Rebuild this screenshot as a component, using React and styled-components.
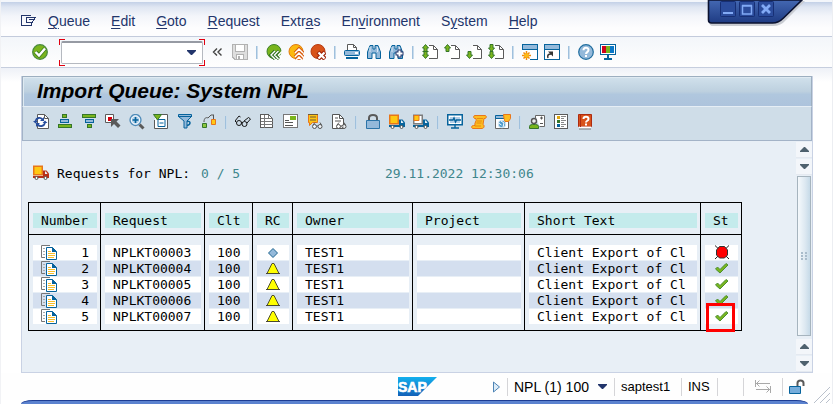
import React from "react";
import styled, { createGlobalStyle, css } from "styled-components";

const C = {
  ink: "#22356b",
  blue: "#06639c",
  sky: "#94b9da",
  green: "#7ab51d",
  leaf: "#35762a",
  gray: "#5a5a5a",
  amber: "#fbb911",
  orange: "#e8761a",
  brick: "#c63f10",
};

const GlobalStyle = createGlobalStyle`
  * { box-sizing: border-box; }
  body { margin: 0; background: #fff; font-family: "Liberation Sans", Arial, sans-serif; }
  button { border: 0; padding: 0; background: none; font: inherit; color: inherit; cursor: pointer; }
  svg { display: block; flex: none; }
`;

const Window = styled.div`
  position: relative;
  display: flex;
  flex-direction: column;
  min-height: 100vh;
  overflow: hidden;
  background: #fff;
  border-right: 1px solid #eceef2;
  border-left: 1px solid #f1f2f5;
`;

const MenuBar = styled.nav`
  display: flex;
  align-items: flex-start;
  gap: 21px;
  height: 37px;
  padding: 11px 20px 0;
  border-top: 2px solid #f3f6fb;
  border-bottom: 1px solid #c3cbdc;
  background: linear-gradient(#c3d0e7 0, #dfe6f2 5px, #f3f5fa 14px, #fdfdfe 26px);
  color: ${C.ink};
  font-size: 14px;
  line-height: 16px;
`;

const MenuItem = styled.button`
  white-space: nowrap;
  u { text-underline-offset: 2px; text-decoration-thickness: 1px; }
`;

const MenuStart = styled(MenuItem)`
  width: 16px;
  margin: 1px -10px 0 0;
`;

const SystemBar = styled.div`
  display: flex;
  align-items: center;
  gap: 6px;
  height: 31px;
  padding: 0 31px;
  border-bottom: 1px solid #c6cede;
  background: linear-gradient(#f3f6fa, #fefefe);
`;

const corner = "linear-gradient(#e00010, #e00010)";
const CommandFrame = styled.div`
  display: flex;
  flex: none;
  width: 146px;
  height: 27px;
  margin: 0 -1px 0 5px;
  padding: 2px;
  background:
    ${corner} 0 0 / 6px 1px, ${corner} 0 0 / 1px 6px,
    ${corner} 100% 0 / 6px 1px, ${corner} 100% 0 / 1px 6px,
    ${corner} 0 100% / 6px 1px, ${corner} 0 100% / 1px 6px,
    ${corner} 100% 100% / 6px 1px, ${corner} 100% 100% / 1px 6px;
  background-repeat: no-repeat;
`;

const CommandField = styled.div`
  display: flex;
  flex: 1;
  min-width: 0;
  align-items: center;
  padding-right: 6px;
  border: 1px solid #b5b9c0;
  border-top: 2px solid #969aa3;
  border-radius: 2px;
  background: #fff;
`;

const CommandInput = styled.input`
  flex: 1;
  width: 100%;
  min-width: 0;
  height: 100%;
  border: 0;
  outline: 0;
  padding: 0 4px;
  background: transparent;
  font: 14px "Liberation Sans", Arial, sans-serif;
`;

const IconButton = styled.button`
  flex: none;
  width: 16px;
  height: 16px;
`;

const Divider = styled.span`
  flex: none;
  width: 2px;
  height: 13px;
  margin: 0 ${(p) => p.$space || 0}px;
  background: linear-gradient(90deg, #9fc0dd 50%, #c9dcec 50%);
`;

const Main = styled.main`
  display: flex;
  flex: 1;
  padding: 8px 19px 0 20px;
  background: linear-gradient(#eef1f7, #fff 14px);
`;

const Panel = styled.section`
  display: flex;
  flex: 1;
  flex-direction: column;
  min-width: 0;
  border: 1px solid #c9d2e4;
  border-top: 0;
  background: #e8eff6;
`;

const TitleBar = styled.header`
  height: 31px;
  padding: 0 14px;
  border: 1px solid #9dafc0;
  border-bottom: 1px solid #e6eef5;
  box-shadow: inset 1px 1px #dfeaf2;
  background: linear-gradient(#d1e1ec, #bdd0df 50%, #b0c7de 60%, #adc3dc);
`;

const Title = styled.h1`
  margin: 0;
  color: #000;
  font-size: 21px;
  font-style: italic;
  font-weight: bold;
  line-height: 28px;
  white-space: nowrap;
`;

const AppBar = styled.div`
  display: flex;
  align-items: flex-start;
  gap: 8px;
  height: 34px;
  padding: 7px 10px 0;
  border: solid #a3b3c7;
  border-width: 0 1px 1px;
  background: #cfdde8;
  ${Divider} { margin-top: 2px; }
`;

const Body = styled.div`
  display: flex;
  flex: 1;
`;

const mono = css`
  color: #000;
  font-family: "DejaVu Sans Mono", monospace;
  font-size: 13px;
  line-height: 15px;
  white-space: pre;
`;

const Report = styled.div`
  flex: 1;
  min-width: 0;
  padding: 24px 6px 0;
  ${mono}
`;

const Summary = styled.div`
  display: grid;
  grid-template-columns: 24px 144px 184px auto;
  align-items: center;
  height: 16px;
  margin: 0 0 21px 5px;
`;

const Teal = styled.span`
  color: #3f868c;
`;

const QueueTable = styled.table`
  border: solid #000;
  border-width: 1px 1px 1px 0;
  border-spacing: 0;
  table-layout: fixed;
  width: 713px;
`;

const Col = styled.col`
  width: ${(p) => p.$w}px;
`;

const HeadCell = styled.th`
  padding: 10px 3px 6px 4px;
  border-left: 1px solid #000;
  border-bottom: 1px solid #000;
  font-weight: normal;
  text-align: left;
`;

const Cell = styled.td`
  padding: 0 3px 1px 4px;
  border-left: 1px solid #000;
  tr:first-child > & { padding-top: 10px; }
  tr:last-child > & { padding-bottom: 6px; }
`;

const Fill = styled.div`
  position: relative;
  display: flex;
  justify-content: ${(p) => (p.$icon ? "center" : "space-between")};
  height: 15px;
  padding: 0 ${(p) => (p.$icon ? 0 : 8)}px;
  background: ${(p) => (p.$head ? "#c4ebec" : p.$odd ? "#d4dfef" : "#fff")};
`;

const Marker = styled.span`
  position: absolute;
  top: -6px;
  left: 1px;
  width: 29px;
  height: 29px;
  border: 3px solid #f00;
`;

const ScrollBar = styled.div`
  display: flex;
  flex-direction: column;
  align-items: center;
  gap: 1px;
  width: 16px;
  padding: 1px 0 0;
`;

const ScrollButton = styled.button`
  display: grid;
  place-items: center;
  width: 16px;
  height: 16px;
  border-bottom: 1px solid #e4e9f0;
  background: #f3f6fa;
`;

const Thumb = styled.div`
  display: grid;
  flex: 1;
  place-items: center;
  width: 14px;
  margin-bottom: 2px;
  border: 1px solid #a6b4be;
  background: linear-gradient(90deg, #f5f9fc, #dce8f1 60%, #c6dae8);
`;

const StatusBar = styled.footer`
  display: flex;
  align-items: center;
  height: 27px;
  padding: 0 26px 0 0;
  color: #000;
  font-size: 13px;
  background: #fefefe;
`;

const StatusLogo = styled.div`
  display: flex;
  flex: 1;
  justify-content: flex-end;
  padding-right: 54px;
`;

const StatusItem = styled.div`
  display: flex;
  flex: none;
  align-items: center;
  justify-content: ${(p) => (p.$center ? "center" : "flex-start")};
  width: ${(p) => p.$w}px;
  height: 18px;
  padding-left: ${(p) => (p.$center ? 0 : 6)}px;
  border-left: 1px solid #d5d5d8;
`;

const SystemButton = styled.button`
  display: flex;
  align-items: center;
  justify-content: space-between;
  width: 93px;
  font-size: 14px;
  white-space: nowrap;
`;

const BottomEdge = styled.div`
  height: 4px;
  margin: 0 24px 0 20px;
  border-top: 1px solid #1d3d94;
  border-radius: 12px 12px 0 0 / 4px 4px 0 0;
  background: #5b82cf;
`;

const ResizeGrip = styled.div`
  position: absolute;
  right: 1px;
  bottom: 0;
`;

const WindowTab = styled.div`
  position: absolute;
  top: 0;
  right: 25px;
  width: 100px;
  height: 28px;
`;

const TabButtons = styled.div`
  position: absolute;
  top: 1px;
  left: 13px;
  display: flex;
  gap: 3px;
`;

const Svg = ({ children, w = 16, h = 16, ...rest }) => (
  <svg width={w} height={h} viewBox={`0 0 ${w} ${h}`} fill="none" aria-hidden="true" {...rest}>
    {children}
  </svg>
);

const Down = () => (
  <Svg w={9} h={5}><path d="M0 0h9v1L5 5H4L0 1z" fill={C.ink} /></Svg>
);

/* shared pieces of the larger icons */
const Arrow = ({ up, x = 0, y = 0 }) => (
  <path
    transform={`translate(${x} ${y})`}
    d={up ? "M3.5.5l3 3.500H5v3.500H2V4H.5z" : "M3.500 7.500l3-3.500H5V.5H2V4H.5z"}
    fill={C.green} stroke={C.leaf}
  />
);
const Page = () => (
  <>
    <path d="M5.500 1.500h6l4 4v9h-10z" fill="#fff" />
    <path d="M7 1.500h4.500l4 4v9H7M11.500 1.500v4h4" stroke={C.gray} />
  </>
);
const Disc = ({ fill, edge }) => <circle cx="8" cy="7.500" r="7" fill={fill} stroke={edge} />;
const Glasses = ({ x = 0, y = 0, c = "#111" }) => (
  <g transform={`translate(${x} ${y})`} stroke={c}>
    <circle cx="2.500" cy="4.500" r="2" fill="#fff" fillOpacity=".7" />
    <circle cx="8" cy="4.500" r="2" fill="#fff" fillOpacity=".7" />
    <path d="M1 3l2-2.500M9.500 3L8 .5M4.500 4h1.500" />
  </g>
);
const Binoculars = () => (
  <>
    <path d="M1.500 14.500V8L4 1.500h3V5h2V1.500h3L14.500 8v6.500h-4.500V9H6v5.500z" fill={C.sky} stroke={C.blue} />
    <path d="M4 3v5M11.500 3v5" stroke="#d7e8f5" />
  </>
);
const Truck = ({ cab, box, edge }) => (
  <>
    <path d="M0 11h10v2H0z" fill={cab} />
    <path d="M10 5.500h3.500l2.500 3V13h-6z" fill={cab} />
    <path d="M12 6.500h1L14.500 9H12z" fill="#e8f1f8" />
    <rect x=".75" y="1.250" width="8.500" height="8.500" fill={box} stroke={edge} strokeWidth="1.500" />
    <circle cx="3.500" cy="13" r="1.500" fill="#fff" stroke="#555" />
    <circle cx="12.500" cy="13" r="1.500" fill="#fff" stroke="#555" />
  </>
);

const icons = {
  start: (
    <Svg w={16} h={13} shapeRendering="crispEdges">
      <path d="M9.500 1.500h-9v10h10V9M5 3.500h9.500L11 8.500H5M5 3v6M8 5.500h4" stroke={C.ink} />
    </Svg>
  ),
  enter: (
    <Svg>
      <circle cx="8" cy="8" r="7.300" fill={C.green} stroke="#4a8b3d" strokeWidth="1.300" />
      <path d="M3.500 8l3.500 3.500 6-7" stroke="#3f7d22" strokeWidth="4" />
      <path d="M3.500 8l3.500 3.500 6-7" stroke="#fff" strokeWidth="2.400" />
    </Svg>
  ),
  collapse: <Svg><path d="M7 4.500L3.500 8 7 11.500M11.500 4.500L8 8l3.500 3.500" stroke="#444" strokeWidth="1.400" /></Svg>,
  save: (
    <Svg shapeRendering="crispEdges">
      <path d="M.5.5h15v15H3l-2.500-2.500z" fill="#dedede" stroke="#b2b2b2" />
      <path d="M3.500.5h9v7h-9zM4.500 10.500h7v5h-7z" fill="#fff" stroke="#b2b2b2" />
      <path d="M6.500 12v3" stroke="#b2b2b2" strokeWidth="2" />
    </Svg>
  ),
  back: (
    <Svg>
      <Disc fill={C.green} edge="#3f812b" />
      <path d="M9 7l-4 4 4 4M13 7l-4 4 4 4" stroke="#2c6b20" strokeWidth="3.200" />
      <path d="M9 7l-4 4 4 4M12.500 7l-4 4 4 4M16 7.500l-3.500 3.500 3.500 4" stroke="#fff" strokeWidth="1.400" />
    </Svg>
  ),
  exit: (
    <Svg>
      <Disc fill={C.amber} edge="#e07a12" />
      <path d="M7 9l4-4 4 4M7 13l4-4 4 4M8 16l3-3 3 3" stroke="#d8590b" strokeWidth="3.400" />
      <path d="M7 9l4-4 4 4M7 13l4-4 4 4M8 16l3-3 3 3" stroke="#fff" strokeWidth="1.500" />
    </Svg>
  ),
  cancel: (
    <Svg>
      <Disc fill="#d8531a" edge="#b83c12" />
      <path d="M8 8l7 7M15 8l-7 7" stroke="#9f250a" strokeWidth="4.500" />
      <path d="M8.500 8.500l6 6M14.500 8.500l-6 6" stroke="#fff" strokeWidth="2.200" />
    </Svg>
  ),
  print: (
    <Svg>
      <path d="M3.500 7.500v-7h6l3 3v4" fill="#fff" stroke={C.gray} />
      <path d="M9.500.5v3h3" stroke={C.gray} />
      <rect x=".5" y="6.500" width="15" height="5" rx="1" fill={C.sky} stroke={C.blue} />
      <path d="M2 14h12" stroke={C.blue} strokeWidth="2" />
      <path d="M11 9h3" stroke="#fff" strokeWidth="2" />
    </Svg>
  ),
  find: <Svg><Binoculars /></Svg>,
  findNext: (
    <Svg>
      <Binoculars />
      <path d="M11.500 5.500v8M7.500 9.500h8" stroke={C.ink} strokeWidth="4" />
      <path d="M11.500 6.500v6M8.500 9.500h6" stroke="#fff" strokeWidth="2" />
    </Svg>
  ),
  first: <Svg><Page /><Arrow up y={0} /><Arrow y={7} /><path d="M.5 7.500h6" stroke={C.leaf} /></Svg>,
  prev: <Svg><Page /><Arrow up y={0} /></Svg>,
  next: <Svg><Page /><Arrow y={7} /></Svg>,
  last: <Svg><Page /><Arrow y={0} /><Arrow y={7} /></Svg>,
  session: (
    <Svg>
      <path d="M.5.5h15v15h-15z" fill="#fff" stroke={C.blue} shapeRendering="crispEdges" />
      <path d="M1 3h14" stroke={C.sky} strokeWidth="4" /><path d="M0 5.500h16" stroke={C.blue} />
      <path d="M0 6h8v10H0z" fill="#fff" />
      <path d="M4.500 7v9M0 11.500h9M1.500 8.500l6 6M7.500 8.500l-6 6" stroke="#f08a0c" strokeWidth="1.500" />
      <circle cx="4.500" cy="11.500" r="2.300" fill="#fdb913" />
    </Svg>
  ),
  shortcut: (
    <Svg>
      <path d="M.5.5h15v15h-15z" fill="#fff" stroke={C.blue} shapeRendering="crispEdges" />
      <path d="M1 3h14" stroke={C.sky} strokeWidth="4" /><path d="M0 5.500h16" stroke={C.blue} />
      <path d="M4 14c-1-3 .5-4 3-4" stroke="#333" strokeWidth="1.500" /><path d="M4 7.500h5v5z" fill="#333" />
    </Svg>
  ),
  help: (
    <Svg>
      <circle cx="8" cy="8" r="7.300" fill={C.sky} stroke="#1f6d9f" strokeWidth="1.200" />
      <path d="M5.500 6.200C5.500 3 10.500 3 10.500 6c0 2-2.500 2.200-2.500 4M8 11v2" stroke="#fff" strokeWidth="2" />
    </Svg>
  ),
  layout: (
    <Svg shapeRendering="crispEdges">
      <path d="M.5.5h15v10H.5z" fill="#fff" stroke={C.blue} />
      <path d="M2 2h4v7H2z" fill="#d0021b" /><path d="M6 2h4v7H6z" fill={C.green} /><path d="M10 2h4v7h-4z" fill="#0a78c8" />
      <path d="M7 11h2v3H7zM4 14h8v2H4z" fill={C.blue} />
    </Svg>
  ),
  refresh: (
    <Svg>
      <path d="M4.500.5h7l4 4v10h-11z" fill="#fff" stroke={C.gray} /><path d="M11.500.5v4h4" stroke={C.gray} />
      <path d="M2.500 7C3.500 3.500 7.500 3 9.500 5.500M12 9c-1 3.500-5 4-7.500 1.500" stroke="#274d9c" strokeWidth="1.800" />
      <path d="M7 7h4V3zM7 9H3v4zM0 7h5L2.500 9.500zM9.500 9h5L12 6.500z" fill="#274d9c" />
    </Svg>
  ),
  asc: (
    <Svg shapeRendering="crispEdges">
      <path d="M5.500.5h4v3h-4zM1.500 10.500h13v3h-13z" fill={C.green} stroke={C.leaf} />
      <path d="M3.500 5.500h8v3h-8z" fill={C.sky} stroke={C.blue} />
    </Svg>
  ),
  desc: (
    <Svg shapeRendering="crispEdges">
      <path d="M1.500.5h13v3h-13zM6.500 10.500h4v3h-4z" fill={C.green} stroke={C.leaf} />
      <path d="M4.500 5.500h8v3h-8z" fill={C.sky} stroke={C.blue} />
    </Svg>
  ),
  select: (
    <Svg>
      <path d="M.5.5h8v8h-8z" fill="#fff" stroke={C.gray} /><path d="M3 3h4v4H3z" fill="#d9000d" />
      <path d="M6 5h8l-2.500 2.500 4 4-2.500 2.500-4-4L6 13z" fill={C.gray} />
    </Svg>
  ),
  zoom: (
    <Svg>
      <path d="M10.500 10.500l4 4" stroke={C.gray} strokeWidth="3" />
      <circle cx="6.500" cy="6" r="5.500" fill={C.sky} stroke="#4f8bb8" strokeWidth="1.300" />
      <circle cx="6.500" cy="6" r="4.200" fill="#b9d5ec" stroke="#fff" /><path d="M6.500 3v6M3.500 6h6" stroke={C.blue} strokeWidth="1.700" />
    </Svg>
  ),
  choose: (
    <Svg>
      <path d="M3.500.5h11v14h-13V6" fill="#fff" stroke={C.gray} />
      <path d="M5 12.500v-7h7v7zM6.500 9h4" stroke={C.blue} />
      <path d="M.5.5h8L4.500 6z" fill={C.green} stroke={C.leaf} />
    </Svg>
  ),
  filter: (
    <Svg>
      <path d="M1.500.5h13v2L10 7v7H7V7L1.500 2.500z" fill={C.sky} stroke={C.blue} />
      <path d="M1 2.500h14" stroke={C.blue} /><path d="M10 7.500c4-1 4 3 0 4" stroke={C.blue} strokeWidth="1.500" />
    </Svg>
  ),
  route: (
    <Svg>
      <path d="M3 8c0-4 2-5 4-4l3-3h3M12.500 1v4" stroke="#555" />
      <path d="M1.500 9.500h4v4h-4z" fill="#8cc63f" stroke={C.leaf} />
      <path d="M10.500 5.500h4v5h-4z" fill="#ffc914" stroke={C.orange} />
    </Svg>
  ),
  display: (
    <Svg>
      <g stroke="#151515">
        <circle cx="4" cy="9" r="2.500" /><circle cx="9.500" cy="10" r="2.500" />
        <path d="M1.500 8.500L0 7l4-5 1.500 1M6.500 9.500L7 8M12 9l3.500-4-2-1.500L9 7" />
      </g>
    </Svg>
  ),
  list: (
    <Svg shapeRendering="crispEdges">
      <path d="M1.500.5h8l4 4v9h-12z" fill="#fff" stroke={C.gray} />
      <path d="M9.500.5v4h4M1.500 4.500h12M1.500 7.500h12M1.500 10.500h12M5.500.5v13" stroke="#777" />
    </Svg>
  ),
  object: (
    <Svg shapeRendering="crispEdges">
      <path d="M.5.5h14v13H.5z" fill="#fff" stroke="#777" /><path d="M7 2h6v4H7z" fill={C.green} />
      <path d="M2 6.500h4M2 8.500h8M2 11.500h8" stroke="#555" />
    </Svg>
  ),
  logs: (
    <Svg>
      <path d="M1.500.5h9v8h-5l-3 3v-3h-1z" fill="#fdc414" stroke={C.orange} />
      <path d="M1 .5h10M3 3h6M3 6h6" stroke="#6d5a3a" /><Glasses x={5} y={8} c="#555" />
    </Svg>
  ),
  preview: (
    <Svg>
      <path d="M1.500.5h7l4 4v10h-11z" fill="#fff" stroke="#555" /><path d="M8.500.5v4h4M4 4h3M4 7h6" stroke="#555" />
      <Glasses x={5} y={8} c="#555" />
    </Svg>
  ),
  lock: (
    <Svg>
      <path d="M4 7V4q0-3 4-3t4 3v3" stroke={C.gray} strokeWidth="2" />
      <path d="M1.500 6.500h13v8h-13z" fill={C.sky} stroke="#2c74a8" />
    </Svg>
  ),
  truck: <Svg><Truck cab={C.blue} box="#ffc814" edge={C.orange} /></Svg>,
  truckPart: (
    <Svg><Truck cab={C.blue} box="#fff" edge="#7d7d7d" /><path d="M1 1.500h5v5H1z" fill="#ffc814" stroke={C.orange} /></Svg>
  ),
  truckRed: <Svg><Truck cab="#b8301a" box="#ffc814" edge={C.orange} /></Svg>,
  monitor: (
    <Svg>
      <rect x=".75" y=".75" width="14.500" height="10" fill="#fff" stroke={C.blue} strokeWidth="1.500" /><path d="M3 3h10v6H3z" fill="#b5d0e8" />
      <path d="M2 6h4l1-2 1.500 4 1-2H14M8 11v3M4 14h8" stroke={C.blue} strokeWidth="1.400" />
    </Svg>
  ),
  script: (
    <Svg>
      <path d="M4 1.500h10c2 0 1.500 3 0 3h-1l-1 6c2 1 1 4-1 4H1.500c-1.500-1-1-3 1-3H4c-1-3 2-4 1-7H3.500c-1.500-1-1-3 .5-3z" fill="#fdbd20" stroke={C.orange} />
      <path d="M6 4.500h6M6 7h5M5.500 9h5M4 12h6" stroke="#e88a10" />
    </Svg>
  ),
  webScript: (
    <Svg>
      <path d="M.5 2.500h13v12H.5z" fill="#fff" stroke="#666" /><path d="M.5 1.500h9v3h-9z" fill={C.sky} stroke={C.blue} />
      <circle cx="7" cy="10" r="3.800" fill="#4d9bcc" stroke="#d9e9f4" /><path d="M6 7l3 2-1 4M3.500 9l3 2" stroke="#fff" />
      <path d="M8.500.5h7v4l-2 3H10l-1-3z" fill="#fdbd20" stroke={C.orange} />
    </Svg>
  ),
  owner: (
    <Svg>
      <path d="M6.500 1.500h9v11h-5M6.500 1.500V4" fill="#fff" stroke="#666" /><path d="M11 4h3M12.500 2.500v3M11 9.500h3" stroke="#555" />
      <path d="M.5 14.500v-2q0-2 3-2h3q3 0 3 2v2z" fill={C.green} stroke={C.leaf} />
      <circle cx="5" cy="7" r="2.500" fill="#eee" stroke="#555" strokeWidth="1.400" />
    </Svg>
  ),
  legend: (
    <Svg shapeRendering="crispEdges">
      <path d="M1.500.5h13v14h-13z" fill="#fff" stroke={C.gray} />
      <path d="M4 2h3v3H4z" fill="#dfa810" /><path d="M4 6h3v3H4z" fill={C.leaf} /><path d="M4 10h3v3H4z" fill={C.blue} />
      <path d="M8 2.500h5M8 4.500h3M8 6.500h5M8 8.500h3M8 10.500h5M8 12.500h3" stroke="#888" />
    </Svg>
  ),
  manual: (
    <Svg>
      <path d="M1.500.5h13v12h-13z" fill="#d8521a" stroke="#ae2b10" />
      <path d="M2 13.500h12" stroke="#fff" strokeWidth="2" /><path d="M2 15h12" stroke="#777" /><path d="M3.500 1v12" stroke="#ae2b10" />
      <path d="M6.500 5c0-3 5-3 5 0 0 2-2.500 1.500-2.500 3.500M9 9.500v2" stroke="#fff" strokeWidth="2" />
    </Svg>
  ),
  copy: (
    <Svg w={16} h={15}>
      <path d="M9 .5H.5v12H4" stroke="#777" />
      <path d="M2 3.500h2M2 6.500h2M2 9.500h2" stroke="#aaa" />
      <path d="M5.500 2.500h6l4 4v8h-10z" fill="#fff" stroke={C.blue} /><path d="M11 2v5h5z" fill={C.blue} />
      <path d="M7 6.500h3M7 8.500h7M7 10.500h7M7 12.500h6" stroke="#f6bf2c" />
    </Svg>
  ),
  diamond: <Svg w={16} h={15}><path d="M8 3.500l4.500 4.500L8 12.500 3.500 8z" fill={C.sky} stroke="#1f6590" /></Svg>,
  warning: <Svg w={16} h={15}><path d="M7 2.500h2l5 10H2z" fill="#ff0" stroke="#50502a" strokeLinejoin="round" /><path d="M1 12.500h14" stroke="#4a4a2e" /></Svg>,
  error: (
    <Svg w={16} h={15}>
      <path d="M1 .5l14 13.500M15 .5L1 14" stroke="#222" />
      <path d="M5.500 1.500h5l3 3.500v5l-3 3h-5l-3-3V5z" fill="#f00" stroke="#333" />
    </Svg>
  ),
  done: (
    <Svg w={16} h={15}>
      <path d="M1.500 8l2-2L6 8.500l6-6 2 1.500-8 8z" fill={C.green} stroke="#4b9031" strokeLinejoin="round" />
    </Svg>
  ),
  insert: (
    <Svg>
      <path d="M.5 1v7M15.500 7v7M1 4.500h14M4.500 1.500l-3 3 3 3M1 10.500h14M11.500 7.500l3 3-3 3" stroke="#a9a9a9" />
    </Svg>
  ),
  unlock: (
    <Svg>
      <path d="M8.500 7V4q0-2.500 3-2.500t3 2.500v3" stroke={C.gray} strokeWidth="2" />
      <path d="M.5 7.500h11v7H.5z" fill="#76addb" stroke={C.blue} />
    </Svg>
  ),
};

const menus = [["", "Q", "ueue"], ["", "E", "dit"], ["", "G", "oto"], ["", "R", "equest"], ["Extr", "a", "s"], ["En", "v", "ironment"], ["S", "y", "stem"], ["", "H", "elp"]];

const systemTools = ["save", "|", "back", "exit", "cancel", "|", "print", "find", "findNext", "|", "first", "prev", "next", "last", "|", "session", "shortcut", "|", "help", "layout"];
const appTools = ["refresh", "asc", "desc", "select", "zoom", "choose", "filter", "route", "|", "display", "list", "object", "logs", "preview", "|", "lock", "truck", "truckPart", "|", "monitor", "script", "webScript", "|", "owner", "legend", "manual"];

const Tools = ({ names, space }) =>
  names.map((n, i) =>
    n === "|" ? <Divider key={i} $space={space} /> : <IconButton key={i} type="button" aria-label={n}>{icons[n]}</IconButton>
  );

const columns = [["Number", 72], ["Request", 104], ["Clt", 48], ["RC", 40], ["Owner", 120], ["Project", 112], ["Short Text", 176], ["St", 41]];
const requests = [
  ["NPLKT00003", "diamond", "error"],
  ["NPLKT00004", "warning", "done"],
  ["NPLKT00005", "warning", "done"],
  ["NPLKT00006", "warning", "done"],
  ["NPLKT00007", "warning", "done"],
];

const Triangle = ({ up }) => (
  <Svg w={9} h={5}><path d={up ? "M4 0h1l4 4v1H0V4z" : "M0 0h9v1L5 5H4L0 1z"} fill="#4e616e" /></Svg>
);

const SapLogo = () => (
  <svg width="39" height="19" viewBox="0 0 39 19" role="img" aria-label="SAP">
    <defs>
      <linearGradient id="sap" x2="0" y2="1"><stop stopColor="#13b0ee" /><stop offset="1" stopColor="#1261b8" /></linearGradient>
    </defs>
    <path d="M0 0h39L20 19H0z" fill="url(#sap)" />
    <text x="0" y="15" fill="#fff" stroke="#fff" strokeWidth=".6" fontFamily="Liberation Sans, Arial, sans-serif" fontWeight="bold" fontSize="14">SAP</text>
  </svg>
);

const WindowControls = () => (
  <WindowTab>
    <svg width="100" height="28" viewBox="0 0 100 28" aria-hidden="true">
      <defs>
        <linearGradient id="tab" x2="0" y2="1"><stop stopColor="#4468b2" /><stop offset="1" stopColor="#1e3b83" /></linearGradient>
      </defs>
      <path d="M2 0v21q0 5 4 5h60q8 0 13-6L98 1z" fill="#c9ccd2" />
      <path d="M1.500 0v20q0 3 3 3h61q6 0 11-5L95 0z" fill="url(#tab)" stroke="#0b1230" strokeWidth="1.600" />
    </svg>
    <TabButtons>
      {[
        ["Minimize", <path key="m" d="M3 12h10" stroke="#82aaf5" strokeWidth="2" />],
        ["Maximize", <path key="x" d="M3.500 5h9v8h-9zM3 4.500h10" stroke="#82aaf5" strokeWidth="1.500" />],
        ["Close", <path key="c" d="M4 4l8 8M12 4l-8 8" stroke="#82aaf5" strokeWidth="2.800" />],
      ].map(([label, mark]) => (
        <IconButton key={label} type="button" aria-label={label}>
          <Svg><rect x=".5" y=".5" width="15" height="15" rx="1" fill="#2b4c9c" stroke="#172f75" />{mark}</Svg>
        </IconButton>
      ))}
    </TabButtons>
  </WindowTab>
);

export default function App() {
  return (
    <>
      <GlobalStyle />
      <Window>
        <MenuBar>
          <MenuStart type="button" aria-label="Menu">{icons.start}</MenuStart>
          {menus.map(([a, u, b]) => (
            <MenuItem key={a + u + b} type="button">{a}<u>{u}</u>{b}</MenuItem>
          ))}
        </MenuBar>
        <SystemBar>
          <IconButton type="button" aria-label="Enter">{icons.enter}</IconButton>
          <CommandFrame>
            <CommandField>
              <CommandInput aria-label="Command" />
              <button type="button" aria-label="Command history"><Down /></button>
            </CommandField>
          </CommandFrame>
          <IconButton type="button" aria-label="Collapse">{icons.collapse}</IconButton>
          <Tools names={systemTools} space={2} />
        </SystemBar>
        <Main>
          <Panel>
            <TitleBar><Title>Import Queue: System NPL</Title></TitleBar>
            <AppBar><Tools names={appTools} /></AppBar>
            <Body>
              <Report>
                <Summary>
                  {icons.truckRed}
                  <span>Requests for NPL:</span>
                  <Teal>0 / 5</Teal>
                  <Teal>29.11.2022 12:30:06</Teal>
                </Summary>
                <QueueTable>
                  <colgroup>{columns.map(([n, w]) => <Col key={n} $w={w} />)}</colgroup>
                  <thead>
                    <tr>{columns.map(([n]) => <HeadCell key={n} scope="col"><Fill $head>{n}</Fill></HeadCell>)}</tr>
                  </thead>
                  <tbody>
                    {requests.map(([id, rc, st], i) => {
                      const odd = i % 2 === 1;
                      return (
                        <tr key={id}>
                          <Cell><Fill $odd={odd}>{icons.copy}<span>{i + 1}</span></Fill></Cell>
                          <Cell><Fill $odd={odd}>{id}</Fill></Cell>
                          <Cell><Fill $odd={odd}>100</Fill></Cell>
                          <Cell><Fill $odd={odd} $icon>{icons[rc]}</Fill></Cell>
                          <Cell><Fill $odd={odd}>TEST1</Fill></Cell>
                          <Cell><Fill $odd={odd} /></Cell>
                          <Cell><Fill $odd={odd}>Client Export of Cl</Fill></Cell>
                          <Cell>
                            <Fill $odd={odd} $icon>{icons[st]}{i === 4 && <Marker />}</Fill>
                          </Cell>
                        </tr>
                      );
                    })}
                  </tbody>
                </QueueTable>
              </Report>
              <ScrollBar>
                <ScrollButton type="button" aria-label="Scroll to top"><Triangle up /></ScrollButton>
                <ScrollButton type="button" aria-label="Scroll down"><Triangle /></ScrollButton>
                <Thumb>
                  <Svg w={6} h={8}><path d="M1 0v8M5 0v8" stroke="#a9bccb" strokeWidth="2" strokeDasharray="2 1" /></Svg>
                </Thumb>
                <ScrollButton type="button" aria-label="Scroll up"><Triangle up /></ScrollButton>
                <ScrollButton type="button" aria-label="Scroll to bottom"><Triangle /></ScrollButton>
              </ScrollBar>
            </Body>
          </Panel>
        </Main>
        <StatusBar>
          <StatusLogo><SapLogo /></StatusLogo>
          <IconButton type="button" aria-label="Expand status">
            <Svg><path d="M2.500 3v10l6-5z" fill="#dcebf7" stroke="#4e84b5" /></Svg>
          </IconButton>
          <StatusItem $w={107}>
            <SystemButton type="button"><span>NPL (1) 100</span><Down /></SystemButton>
          </StatusItem>
          <StatusItem $w={67}>saptest1</StatusItem>
          <StatusItem $w={36}>INS</StatusItem>
          <StatusItem $w={26} />
          <StatusItem $w={39} $center>{icons.insert}</StatusItem>
          <StatusItem $w={24}>{icons.unlock}</StatusItem>
        </StatusBar>
        <BottomEdge />
        <ResizeGrip>
          <Svg w={18} h={18}><path d="M1 17L17 1M7 17L17 7M13 17l4-4" stroke="#b9c0cb" /></Svg>
        </ResizeGrip>
        <WindowControls />
      </Window>
    </>
  );
}
